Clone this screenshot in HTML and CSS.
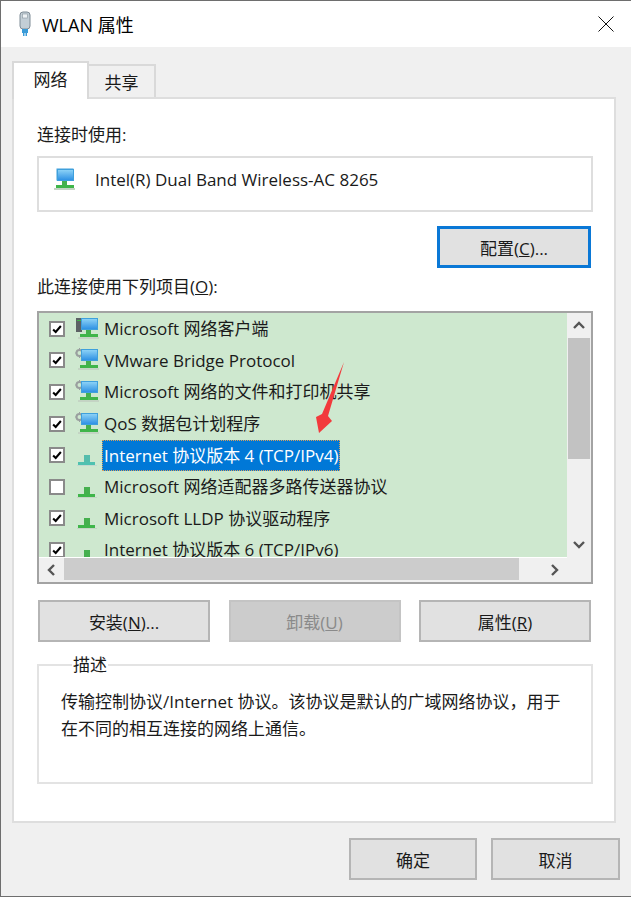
FILE: index.html
```html
<!DOCTYPE html>
<html lang="zh-CN">
<head>
    <meta charset="UTF-8">
    <meta name="viewport" content="width=device-width, initial-scale=1.0">
    <title>WLAN 属性</title>
    <link rel="stylesheet" href="styles.css">
</head>
<body>
    <svg class="defs" width="0" height="0">
        <defs>
            <linearGradient id="screen" x1="0" y1="0" x2="0" y2="1">
                <stop offset="0" stop-color="#8fd4f7"/>
                <stop offset="1" stop-color="#2b8fe3"/>
            </linearGradient>
            <symbol id="monitor" viewBox="0 0 24 24">
                <rect x="6.5" y="1.5" width="16" height="11" fill="url(#screen)" stroke="#3fa0dc"/>
                <rect x="11" y="13" width="5" height="4" fill="#45b04e"/>
                <rect x="5" y="17" width="18" height="3" fill="#3fb54a"/>
                <rect x="3" y="20" width="21" height="2" fill="#c4d4c4"/>
            </symbol>
            <symbol id="gear" viewBox="0 0 24 24">
                <circle cx="4.5" cy="5" r="3" fill="none" stroke="#9a9f9f" stroke-width="2"/>
                <path d="M4.500 0v2M4.500 8v2M0 5h2M7 5h2" stroke="#9a9f9f"/>
                <use href="#monitor"/>
            </symbol>
            <symbol id="server" viewBox="0 0 24 24">
                <rect x="1" y="1" width="6" height="14" fill="#5d6265"/>
                <rect x="2" y="3" width="4" height="1" fill="#3fb54a"/>
                <use href="#monitor"/>
            </symbol>
            <symbol id="proto" viewBox="0 0 24 24">
                <rect x="9" y="12" width="6" height="7" fill="#45b04e"/>
                <rect x="3" y="19" width="17" height="3" fill="#3fb54a"/>
                <rect x="2" y="22" width="20" height="1" fill="#c4d4c4"/>
            </symbol>
            <symbol id="check" viewBox="0 0 14 14">
                <path d="M2.500 7.500l3 3 6-7" fill="none" stroke="#000" stroke-width="2.400"/>
            </symbol>
        </defs>
    </svg>

    <div class="window">
        <div class="titlebar">
            <svg class="title-icon" width="16" height="26" viewBox="0 0 16 26">
                <rect x="3" y="1" width="10" height="17" rx="3" fill="#c3ced6" stroke="#7f8c96"/>
                <rect x="5.500" y="3" width="5" height="4" fill="#eef2f5" stroke="#8b98a1" stroke-width="0.600"/>
                <rect x="5" y="18" width="6" height="4" fill="#3a9bd8"/>
                <rect x="6" y="22" width="1.500" height="3" fill="#3a9bd8"/>
                <rect x="8.500" y="22" width="1.500" height="3" fill="#3a9bd8"/>
            </svg>
            <span class="title-text">WLAN 属性</span>
            <svg class="close-icon" width="16" height="16" viewBox="0 0 16 16">
                <path d="M0.500 0.500l15 15M15.500 0.500l-15 15" stroke="#111" fill="none"/>
            </svg>
        </div>

        <div class="tabs">
            <div class="tab active">网络</div>
            <div class="tab">共享</div>
        </div>

        <div class="panel">
            <div class="label first">连接时使用:</div>
            <div class="adapter-box">
                <svg class="adapter-icon" width="24" height="24" viewBox="0 0 24 24">
                    <rect x="5.500" y="0.500" width="17" height="12" fill="#3fa0dc"/>
                    <use href="#monitor"/>
                </svg>
                <span>Intel(R) Dual Band Wireless-AC 8265</span>
            </div>
            <div class="config-row">
                <button class="btn btn-focus">配置(<u>C</u>)...</button>
            </div>
            <div class="label second">此连接使用下列项目(<u>O</u>):</div>

            <div class="list-box">
                <div class="list-view">
                    <div class="list-row">
                        <span class="checkbox"><svg width="14" height="14"><use href="#check"/></svg></span>
                        <svg class="row-icon"><use href="#server"/></svg>
                        <span class="row-text">Microsoft 网络客户端</span>
                    </div>
                    <div class="list-row">
                        <span class="checkbox"><svg width="14" height="14"><use href="#check"/></svg></span>
                        <svg class="row-icon"><use href="#gear"/></svg>
                        <span class="row-text">VMware Bridge Protocol</span>
                    </div>
                    <div class="list-row">
                        <span class="checkbox"><svg width="14" height="14"><use href="#check"/></svg></span>
                        <svg class="row-icon"><use href="#gear"/></svg>
                        <span class="row-text">Microsoft 网络的文件和打印机共享</span>
                    </div>
                    <div class="list-row">
                        <span class="checkbox"><svg width="14" height="14"><use href="#check"/></svg></span>
                        <svg class="row-icon"><use href="#gear"/></svg>
                        <span class="row-text">QoS 数据包计划程序</span>
                    </div>
                    <div class="list-row selected">
                        <span class="checkbox"><svg width="14" height="14"><use href="#check"/></svg></span>
                        <svg class="row-icon"><use href="#proto"/></svg>
                        <span class="row-text">Internet 协议版本 4 (TCP/IPv4)</span>
                    </div>
                    <div class="list-row">
                        <span class="checkbox"></span>
                        <svg class="row-icon"><use href="#proto"/></svg>
                        <span class="row-text">Microsoft 网络适配器多路传送器协议</span>
                    </div>
                    <div class="list-row">
                        <span class="checkbox"><svg width="14" height="14"><use href="#check"/></svg></span>
                        <svg class="row-icon"><use href="#proto"/></svg>
                        <span class="row-text">Microsoft LLDP 协议驱动程序</span>
                    </div>
                    <div class="list-row">
                        <span class="checkbox"><svg width="14" height="14"><use href="#check"/></svg></span>
                        <svg class="row-icon"><use href="#proto"/></svg>
                        <span class="row-text">Internet 协议版本 6 (TCP/IPv6)</span>
                    </div>
                </div>

                <div class="vscroll">
                    <svg class="arrow-btn" width="24" height="25" viewBox="0 0 24 25"><path d="M7 15l5-5 5 5" class="chevron"/></svg>
                    <div class="vthumb"></div>
                    <div class="vspace"></div>
                    <svg class="arrow-btn" width="24" height="25" viewBox="0 0 24 25"><path d="M7 10l5 5 5-5" class="chevron"/></svg>
                </div>
                <div class="hscroll">
                    <svg class="arrow-btn" width="25" height="24" viewBox="0 0 25 24"><path d="M15 7l-5 5 5 5" class="chevron"/></svg>
                    <div class="hthumb"></div>
                    <div class="hspace"></div>
                    <svg class="arrow-btn" width="25" height="24" viewBox="0 0 25 24"><path d="M10 7l5 5-5 5" class="chevron"/></svg>
                </div>
                <div class="corner"></div>
            </div>

            <div class="action-row">
                <button class="btn">安装(<u>N</u>)...</button>
                <button class="btn btn-disabled">卸载(<u>U</u>)</button>
                <button class="btn">属性(<u>R</u>)</button>
            </div>

            <fieldset class="desc-group">
                <legend>描述</legend>
                <p>传输控制协议/Internet 协议。该协议是默认的广域网络协议，用于在不同的相互连接的网络上通信。</p>
            </fieldset>
        </div>

        <div class="footer">
            <button class="btn btn-footer">确定</button>
            <button class="btn btn-footer wide">取消</button>
        </div>

        <!-- annotation arrow drawn over the list -->
        <svg class="annotation" width="40" height="80" viewBox="0 0 40 80">
            <polygon points="30,1 14,55 18,60 5,72 2,56 8,53" fill="#f23a3c"/>
        </svg>
    </div>
</body>
</html>
```

FILE: styles.css
```css
* {
    margin: 0;
    padding: 0;
    box-sizing: border-box;
}

body {
    font-family: "Open Sans", "Noto Sans CJK SC", sans-serif;
    font-size: 17px;
    color: #1a1a1a;
    background: #fff;
    width: 631px;
    height: 897px;
    overflow: hidden;
}

.defs {
    position: absolute;
}

.window {
    position: relative;
    height: 897px;
    background: #f0f0f0;
    border-top: 1px solid #6e6e6e;
    border-left: 1px solid #6e6e6e;
    border-bottom: 1px solid #6e6e6e;
}

.titlebar {
    display: flex;
    align-items: center;
    height: 46px;
    background: #fff;
    padding: 0 17px 0 16px;
}

.title-icon {
    margin-right: 9px;
}

.title-text {
    flex: 1;
    font-size: 18px;
    color: #000;
}

.tabs {
    display: flex;
    align-items: flex-end;
    height: 36px;
    margin: 14px 0 0 11px;
    position: relative;
    z-index: 1;
}

.tab {
    width: 67px;
    height: 33px;
    line-height: 33px;
    text-align: center;
    background: #f0f0f0;
    border: 2px solid #d9d9d9;
    border-left: 0;
    border-bottom: 0;
}

.tab.active {
    width: 77px;
    height: 38px;
    line-height: 34px;
    background: #fff;
    margin-bottom: -2px;
    border-left: 2px solid #d9d9d9;
}

.panel {
    width: 604px;
    height: 726px;
    margin-left: 11px;
    padding: 0 21px 0 23px;
    background: #fff;
    border: 2px solid #dedede;
}

.label {
    height: 22px;
    line-height: 22px;
}

.label.first {
    margin-top: 25px;
}

.label.second {
    margin-top: 8px;
}

.adapter-box {
    display: flex;
    align-items: flex-start;
    height: 56px;
    margin-top: 10px;
    padding: 10px 0 0 12px;
    border: 2px solid #dedede;
}

.adapter-box span {
    margin-left: 20px;
    line-height: 24px;
}

.adapter-icon {
    flex: none;
}

.config-row {
    display: flex;
    justify-content: flex-end;
    margin-top: 14px;
    padding-right: 2px;
}

.btn {
    font: inherit;
    color: #1a1a1a;
    height: 42px;
    background: #e1e1e1;
    border: 2px solid #b5b5b5;
}

.btn-focus {
    width: 154px;
    border: 3px solid #0a78d6;
}

.btn-disabled {
    color: #8a8a8a;
    background: #cccccc;
    border-color: #c4c4c4;
}

.list-box {
    display: grid;
    grid-template-columns: 1fr 24px;
    grid-template-rows: 244px 25px;
    height: 273px;
    margin-top: 13px;
    border: 2px solid #a3a3a3;
    background: #fff;
}

.list-view {
    overflow: hidden;
    background: #cee8cf;
}

.list-row {
    display: flex;
    align-items: center;
    height: 31.6px;
    padding-left: 10px;
}

.checkbox {
    flex: none;
    display: flex;
    align-items: center;
    justify-content: center;
    width: 16px;
    height: 16px;
    background: #fff;
    border: 2px solid #8a8a8a;
}

.row-icon {
    flex: none;
    width: 24px;
    height: 24px;
    margin-left: 10px;
}

.row-text {
    margin-left: 3px;
    padding: 0 2px;
    line-height: 31px;
    white-space: nowrap;
    color: #1a1a1a;
}

.selected .row-text {
    color: #fff;
    background: #0078d7;
    outline: 1px dotted #d9a05b;
    outline-offset: -1px;
}

.selected .row-icon {
    opacity: 0.75;
    filter: hue-rotate(50deg);
}

.vscroll {
    display: flex;
    flex-direction: column;
    background: #f0f0f0;
}

.hscroll {
    display: flex;
    background: #f0f0f0;
    border-top: 1px solid #fff;
}

.arrow-btn {
    flex: none;
}

.chevron {
    fill: none;
    stroke: #555;
    stroke-width: 2.400;
}

.vthumb {
    height: 121px;
    margin: 0 1px;
    background: #c2c2c2;
}

.vspace,
.hspace {
    flex: 1;
}

.hthumb {
    width: 455px;
    margin: 0 0 2px;
    background: #cccccc;
}

.corner {
    background: #f0f0f0;
}

.action-row {
    display: grid;
    grid-template-columns: 172px 172px 172px;
    justify-content: space-between;
    margin-top: 16px;
    padding: 0 2px 0 1px;
}

.desc-group {
    height: 130px;
    margin-top: 12px;
    padding: 0 22px;
    border: 2px solid #e3e3e3;
}

.desc-group legend {
    margin-left: 11px;
    padding: 0 1px;
    line-height: 22px;
}

.desc-group p {
    margin-top: 12px;
    line-height: 27px;
}

.footer {
    display: flex;
    justify-content: flex-end;
    gap: 14px;
    margin-top: 15px;
    padding-right: 11px;
}

.btn-footer {
    width: 128px;
}

.btn-footer.wide {
    width: 129px;
}

.annotation {
    position: absolute;
    left: 313px;
    top: 360px;
}
```
